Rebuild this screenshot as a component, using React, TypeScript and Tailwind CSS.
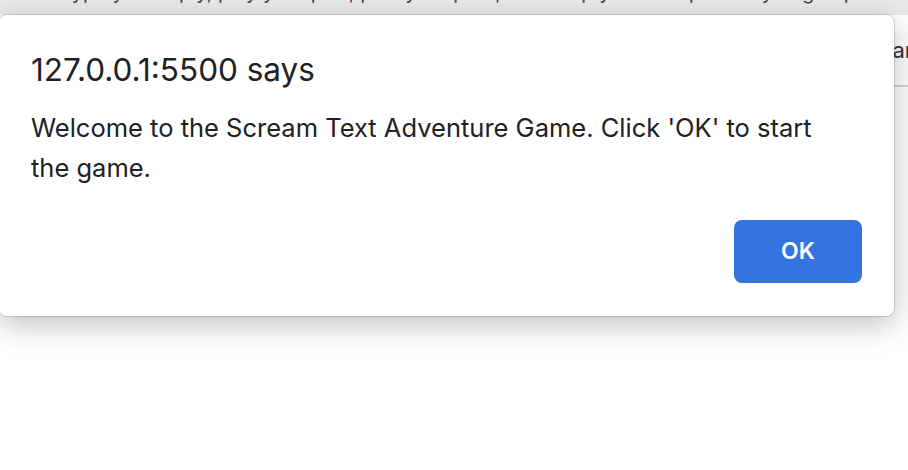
export default function App() {
  return (
    <div className="relative h-[470px] w-[908px] overflow-hidden bg-white font-['Inter','Noto_Sans',sans-serif] text-[#202124]">
      {/* page behind the alert */}
      <div className="h-[15px] overflow-hidden bg-[#e9e9e9]">
        <p className="-mt-[20px] whitespace-nowrap pl-[60px] text-[20px] leading-[24px] text-[#444]">
          Type your reply, play your part, pick your path, and keep yourself quiet as you go up
        </p>
      </div>
      <div className="flex h-[72px] items-center whitespace-nowrap border-b-2 border-[#d4d4d4] pl-[858px] text-[22px] text-[#333]">
        Clear
      </div>

      {/* alert dialog */}
      <div className="absolute left-[-1px] top-[15px] flex h-[301px] w-[895px] flex-col rounded-lg bg-white pl-[32px] pr-[32px] pt-[35px] shadow-[0_0_0_1px_rgba(0,0,0,0.14),0_8px_30px_rgba(0,0,0,0.26)]">
        <h1 className="text-[31.5px] leading-[40px] text-[#202124]">127.0.0.1:5500 says</h1>
        <p className="mt-[18px] max-w-[815px] text-[25.5px] leading-[40px] text-[#202124]">
          Welcome to the Scream Text Adventure Game. Click 'OK' to start the game.
        </p>
        <div className="mt-auto flex justify-end pb-[33px]">
          <button className="h-[63px] w-[128px] rounded-lg bg-[#3574e0] text-[23px] font-semibold text-white">
            OK
          </button>
        </div>
      </div>
    </div>
  );
}
